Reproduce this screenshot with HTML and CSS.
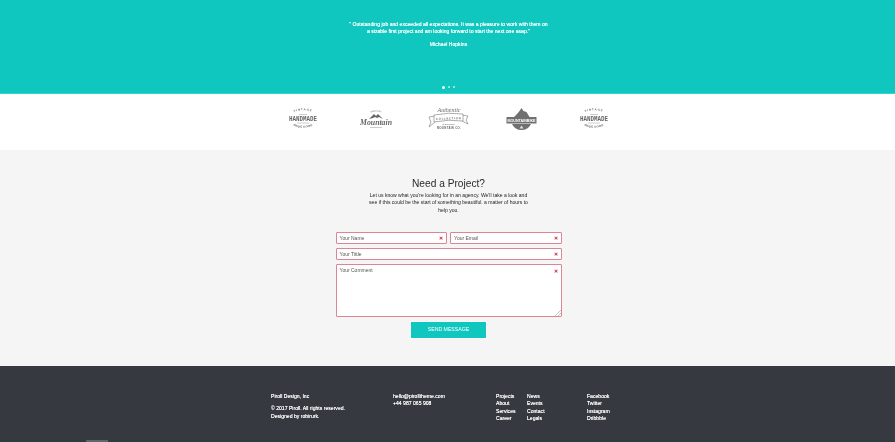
FILE: index.html
```html
<!DOCTYPE html>
<html lang="en">
<head>
<meta charset="utf-8">
<title>Piroll Design</title>
<link rel="stylesheet" href="styles.css">
</head>
<body>
<section class="hero">
  <p class="quote">" Outstanding job and exceeded all expectations. It was a pleasure to work with them on<br>a sizable first project and am looking forward to start the next one asap."</p>
  <p class="author">Michael Hopkins</p>
  <div class="dots"><span class="dot active"></span><span class="dot"></span><span class="dot"></span></div>
</section>
<section class="logos">
  <svg class="logo" width="30" height="24" viewBox="0 0 30 24">
    <path id="arcA" class="lg-none" d="M3 6.500Q15 0 27 6.500"/>
    <text class="lg-small lg-wide"><textPath href="#arcA" startOffset="50%" text-anchor="middle">VINTAGE</textPath></text>
    <path class="lg-line" d="M11 7.500h8"/>
    <text class="lg-bold" x="15" y="14" text-anchor="middle" textLength="28" lengthAdjust="spacingAndGlyphs">HANDMADE</text>
    <path class="lg-line" d="M9 16h12"/>
    <path id="arcB" class="lg-none" d="M4 18Q15 23.500 26 18"/>
    <text class="lg-small"><textPath href="#arcB" startOffset="50%" text-anchor="middle">MADE GOOD</textPath></text>
  </svg>
  <svg class="logo" width="32" height="24" viewBox="0 0 32 24">
    <path id="arcC" class="lg-none" d="M7 8Q16 1 25 8"/>
    <text class="lg-tiny"><textPath href="#arcC" startOffset="50%" text-anchor="middle">SINCE EST</textPath></text>
    <path class="lg-peak" d="M9 12l5-5 2 2 2-2 5 5-4-2-2 1-2-1-2 1z"/>
    <text class="lg-script" x="16" y="17.500" text-anchor="middle" textLength="32" lengthAdjust="spacingAndGlyphs">Mountain</text>
    <path class="lg-line" d="M10 20.500h12"/>
  </svg>
  <svg class="logo" width="41" height="24" viewBox="0 0 41 24">
    <text class="lg-script-sm" x="21" y="5" text-anchor="middle">Authentic</text>
    <path class="lg-ribbon" d="M1 10l6-1v6l-6 5 2-5z"/>
    <path class="lg-ribbon" d="M40 9l-6-1v6l6 3-2-4z"/>
    <path class="lg-ribbon" d="M6 8q15 -3 29 -1v7q-14 -2 -29 1z"/>
    <text class="lg-small" x="20.500" y="12.500" text-anchor="middle" textLength="25" transform="rotate(-2 20 12)">COLLECTION</text>
    <text class="lg-tiny" x="20.500" y="18" text-anchor="middle">IN BUSINESS</text>
    <text class="lg-small" x="21" y="22" text-anchor="middle">MOUNTAIN CO.</text>
  </svg>
  <svg class="logo" width="31" height="24" viewBox="0 0 31 24">
    <path class="lg-fill" d="M8 10l3-3 2.500-3 2-3 2 3 3 1 3 5z"/>
    <rect class="lg-fill" x="0.500" y="10" width="30" height="6.500"/>
    <text class="lg-band" x="15.500" y="14.900" text-anchor="middle" textLength="28" lengthAdjust="spacingAndGlyphs">MOUNTAINBIKE</text>
    <path class="lg-fill" d="M6 17h19q-3 6-9.500 6T6 17z"/>
    <path class="lg-white" d="M15.500 18.500l2 3h-4z"/>
  </svg>
  <svg class="logo" width="30" height="24" viewBox="0 0 30 24">
    <path id="arcD" class="lg-none" d="M3 6.500Q15 0 27 6.500"/>
    <text class="lg-small lg-wide"><textPath href="#arcD" startOffset="50%" text-anchor="middle">VINTAGE</textPath></text>
    <path class="lg-line" d="M11 7.500h8"/>
    <text class="lg-bold" x="15" y="14" text-anchor="middle" textLength="28" lengthAdjust="spacingAndGlyphs">HANDMADE</text>
    <path class="lg-line" d="M9 16h12"/>
    <path id="arcE" class="lg-none" d="M4 18Q15 23.500 26 18"/>
    <text class="lg-small"><textPath href="#arcE" startOffset="50%" text-anchor="middle">MADE GOOD</textPath></text>
  </svg>
</section>
<section class="contact">
  <h2 class="title">Need a Project?</h2>
  <p class="intro">Let us know what you're looking for in an agency. We'll take a look and<br>see if this could be the start of something beautiful. a matter of hours to<br>help you.</p>
  <form class="form">
    <div class="row">
      <div class="field"><span class="ph">Your Name</span><i class="err">&#10005;</i></div>
      <div class="field"><span class="ph">Your Email</span><i class="err">&#10005;</i></div>
    </div>
    <div class="field"><span class="ph">Your Tittle</span><i class="err">&#10005;</i></div>
    <div class="field area"><span class="ph">Your Comment</span><i class="err">&#10005;</i>
      <svg class="grip" width="6" height="6" viewBox="0 0 6 6"><path d="M0 6l6-6M3 6l3-3" /></svg>
    </div>
    <div class="submit"><span class="submit-label">SEND MESSAGE</span></div>
  </form>
</section>
<footer class="footer">
  <div class="f-inner">
    <div class="f-brand">
      <p class="f-line">Piroll Design, Inc</p>
      <p class="f-copy">&copy; 2017 Piroll. All rights reserved.<br>Designed by robirurk.</p>
    </div>
    <div class="f-mail">
      <p class="f-line">hello@pirolltheme.com</p>
      <p class="f-line">+44 987 065 908</p>
    </div>
    <ul class="f-list f-a"><li>Projects</li><li>About</li><li>Services</li><li>Career</li></ul>
    <ul class="f-list f-b"><li>News</li><li>Events</li><li>Contact</li><li>Legals</li></ul>
    <ul class="f-list"><li>Facebook</li><li>Twitter</li><li>Instagram</li><li>Dribbble</li></ul>
  </div>
  <div class="f-strip"><span class="f-thumb"></span></div>
</footer>
</body>
</html>
```
FILE: styles.css
```css
* { box-sizing: border-box; }
html, body { margin: 0; padding: 0; }
body {
  width: 895px;
  height: 442px;
  overflow: hidden;
  font-family: "Liberation Sans", Arial, sans-serif;
  background: #f5f5f5;
}
p, h2, ul { margin: 0; padding: 0; }

.hero {
  height: 94px;
  padding: 21px 0 0 2px;
  background: #10c7bf;
  border-bottom: 1px solid #2fd5cf;
  color: #fff;
  text-align: center;
  display: flex;
  flex-direction: column;
  align-items: center;
}
.quote, .author { font-size: 5.100px; text-shadow: 0 0 0.3px #fff; filter: blur(0.25px); }
.quote { line-height: 7.400px; }
.author { line-height: 7px; margin-top: 5px; }
.dots { display: flex; gap: 3px; align-items: center; margin-top: auto; margin-bottom: 4px; }
.dot { width: 2px; height: 2px; border-radius: 50%; background: #bfeeec; }
.dot.active { width: 3.500px; height: 3.500px; background: #fff; }

.logos {
  height: 56px;
  background: #fff;
  display: grid;
  grid-template-columns: repeat(5, 72.600px);
  justify-content: center;
  justify-items: center;
  align-items: center;
  padding: 0 0 6px 2px;
}
.logo { display: block; filter: blur(0.3px); }
.lg-none { fill: none; }
.lg-tiny { font: 700 2px "Liberation Sans", sans-serif; fill: #888; }
.lg-small { font: 700 2.800px "Liberation Sans", sans-serif; fill: #666; letter-spacing: 0.300px; }
.lg-wide { letter-spacing: 0.900px; }
.lg-bold { font: 700 6.300px "Liberation Mono", monospace; fill: #666; }
.lg-script { font: italic 700 7.500px "Liberation Serif", serif; fill: #666; }
.lg-script-sm { font: italic 6px "Liberation Serif", serif; fill: #666; }
.lg-band { font: 700 3.600px "Liberation Sans", sans-serif; fill: #fff; }
.lg-line { fill: none; stroke: #999; stroke-width: 0.500; }
.lg-peak { fill: #666; }
.lg-ribbon { fill: #fff; stroke: #777; stroke-width: 0.600; }
.lg-fill { fill: #707070; }
.lg-white { fill: #ddd; }

.contact {
  height: 216px;
  padding: 27px 0 0 2px;
  background: #f5f5f5;
  display: flex;
  flex-direction: column;
  align-items: center;
}
.title { font-size: 10.200px; line-height: 13px; font-weight: 400; color: #2a2a2a; filter: blur(0.2px); }
.intro { font-size: 5.050px; line-height: 7.300px; text-align: center; color: #222; margin-top: 2px; filter: blur(0.25px); }
.form { width: 226px; margin-top: 18px; display: flex; flex-direction: column; gap: 4px; }
.row { display: flex; gap: 3px; }
.row .field { flex: 1; }
.field {
  position: relative;
  height: 12px;
  padding: 0 3px;
  background: #fff;
  border: 1px solid #db8595;
  border-radius: 1px;
  font-size: 5px;
  line-height: 10px;
  color: #555;
}
.ph { display: inline-block; filter: blur(0.25px); }
.err {
  position: absolute;
  top: 0;
  right: 3px;
  font-style: normal;
  font-weight: 700;
  font-size: 5px;
  color: #d0103a;
}
.area { height: 53px; }
.area .err { top: 1px; }
.grip { position: absolute; right: 0; bottom: 0; stroke: #888; stroke-width: 0.500; }
.submit {
  align-self: center;
  width: 77px;
  height: 18px;
  background: #10c7bf;
  color: #fff;
  font-size: 5.200px;
  line-height: 15px;
  text-align: center;
  border: 1px solid #fbfbfb;
}
.submit-label { display: inline-block; filter: blur(0.25px); }

.footer {
  height: 76px;
  background: #363a40;
  color: #fff;
  font-size: 5.100px;
  line-height: 7.300px;
  display: flex;
  flex-direction: column;
}
.f-inner { flex: 1; display: flex; padding: 27px 0 0 271px; text-shadow: 0 0 0.3px #fff; }
.f-brand, .f-mail, .f-list { filter: blur(0.25px); }
.f-brand { width: 122px; }
.f-copy { margin-top: 5px; }
.f-mail { width: 103px; }
.f-list { list-style: none; }
.f-a { width: 31px; }
.f-b { width: 60px; }
.f-strip { height: 2px; background: #2a3c40; position: relative; }
.f-thumb { position: absolute; left: 86px; top: 0; width: 22px; height: 2px; background: #5a686c; }
```
